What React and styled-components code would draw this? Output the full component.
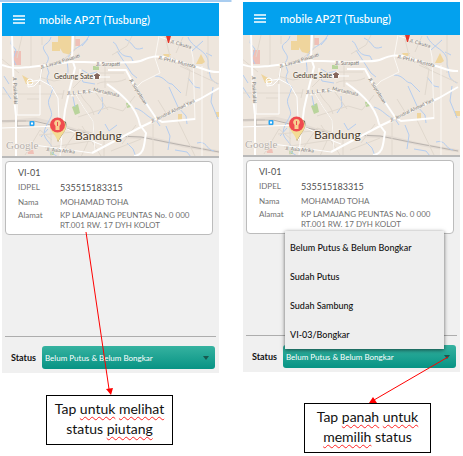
import React from "react";
import styled, { createGlobalStyle } from "styled-components";

const GlobalStyle = createGlobalStyle`
  * { box-sizing: border-box; }
  body {
    margin: 0;
    background: #fff;
    color: #111;
    font-family: Lato, "Open Sans", sans-serif;
  }
`;

const Page = styled.main`
  display: grid;
  grid-template-columns: 1fr 1fr;
  gap: 24px;
  padding: 0 3px 0 2px;
  background: linear-gradient(#a9cdf0, #a9cdf0) 0 0 / 50% 2px no-repeat;
`;

const Column = styled.section`
  position: relative;
  display: flex;
  flex-direction: column;
  padding-top: ${(p) => p.$top}px;
`;

const Phone = styled.div`
  display: flex;
  flex-direction: column;
  background: #f0f0f0;
`;

const AppBar = styled.header`
  display: flex;
  align-items: center;
  gap: 14px;
  height: 33px;
  padding: 0 11px;
  background: #03a1ee;
  color: #fff;
`;

const MenuButton = styled.button`
  display: flex;
  padding: 0;
  border: 0;
  background: none;
  color: inherit;
`;

const Title = styled.h1`
  margin: 0;
  font-size: 11px;
  line-height: 16px;
  font-weight: 500;
  white-space: nowrap;
`;

const MapFrame = styled.div`
  height: 122px;
  border-bottom: 2px solid #b9b9b9;
  background: #eee6dd;

  svg {
    display: block;
    width: 100%;
    height: 100%;
  }
`;

const Card = styled.article`
  margin: 3px 6px 0 3px;
  padding: 4px 12px;
  border: 1px solid #bcbcbc;
  border-radius: 4px;
  background: #fff;
  color: #707070;
`;

const CardTitle = styled.h2`
  margin: 0;
  font-size: 9px;
  line-height: 14px;
  font-weight: 400;
  color: #505050;
`;

const Details = styled.dl`
  display: grid;
  grid-template-columns: 42px 1fr;
  margin: 0;
  font-size: 8px;
  line-height: 10px;
`;

const Term = styled.dt`
  font-size: 8px;
  line-height: ${(p) => (p.$tall ? 15 : 10)}px;
`;

const Value = styled.dd`
  margin: 0;
  font-size: ${(p) => (p.$large ? 9 : 8)}px;
  line-height: ${(p) => (p.$tall ? 15 : 10)}px;
  color: ${(p) => (p.$large ? "#505050" : "#707070")};
  white-space: nowrap;
`;

const StatusBar = styled.form`
  display: flex;
  align-items: center;
  gap: 6px;
  margin: 101px 3px 0;
  padding: 9px 1px 4px 6px;
  border-top: 1px solid #adadad;
`;

const StatusLabel = styled.label`
  width: 25px;
  font-size: 9px;
  line-height: 12px;
  font-weight: 700;
`;

const SelectWrap = styled.div`
  position: relative;
  flex: 1;
  display: flex;
  align-items: center;
`;

const Select = styled.select`
  appearance: none;
  width: 100%;
  height: 23px;
  padding: 0 16px 0 3px;
  border: 0;
  border-radius: 3px;
  background: linear-gradient(#36b2a0, #079384);
  color: #fff;
  font-family: inherit;
  font-size: 8px;
`;

const Caret = styled.svg`
  position: absolute;
  right: 6px;
  pointer-events: none;
`;

const Menu = styled.ul`
  position: absolute;
  z-index: 1;
  left: 2px;
  right: 12px;
  bottom: 19px;
  margin: 0;
  padding: 2px 0 0;
  list-style: none;
  background: #eee;
  box-shadow: 0 1px 4px #0009;
`;

const MenuItem = styled.button`
  display: block;
  width: 100%;
  padding: 0 5px;
  border: 0;
  background: none;
  color: #111;
  font-family: inherit;
  font-size: 9px;
  font-weight: 500;
  line-height: 29px;
  text-align: left;
`;

const Note = styled.p`
  align-self: flex-start;
  width: 127px;
  margin: ${(p) => (p.$low ? "31px 0 0 61px" : "22px 0 0 44px")};
  padding: 3px 0 5px;
  border: 1px solid #000;
  background: #fff;
  color: #111;
  font-size: 14px;
  line-height: 20px;
  text-align: center;
`;

const Misspelt = styled.span`
  text-decoration: underline wavy #f22 1px;
  text-underline-offset: 2px;
  text-decoration-skip-ink: none;
`;

const Pointer = styled.svg`
  position: absolute;
  z-index: 2;
  left: 0;
  top: 0;
  overflow: visible;
  pointer-events: none;
`;

const STATUSES = ["Belum Putus & Belum Bongkar", "Sudah Putus", "Sudah Sambung", "VI-03/Bongkar"];

function CityMap({ shift }) {
  return (
    <MapFrame>
      <svg viewBox={`${2 + shift} 36 217 120`} preserveAspectRatio="xMidYMid slice" role="img" aria-label="Bandung">
        <g fill="#efd59d">
          <path d="M58 36h13v19l-8-2-5-8zM52 42h8v9h-8z" />
          <path d="M196 64l5-10 4 8-3 2zM163 54h8l-4 6zM178 114h4v6h-4zM216 112h6v5h-6zM22 75l7 4 5 4-8 1z" />
        </g>
        <path fill="#efc0b7" d="M14 51h7v14h-7zM75 39h5v7h-5zM27 150l6-1 1 5h-6z" />
        <path fill="#b9d49c" d="M72 107l6-3 2 9-5 2zM93 66h6v4h-6zM126 103l4-1 1 5-4 1zM50 151h4v4h-4z" />
        <path fill="none" stroke="#e4dcd4" strokeWidth="3" d="M2 122l34-3 24 6 30 10 60 3 34 8 36 6" />
        <path fill="none" stroke="#b9b3ae" strokeWidth="1" d="M2 121h32l30 7 31 7 46 2 35 7 43 8M17 121v5h17" />
        <g fill="none" stroke="#b4cdf0" strokeWidth="1">
          <path d="M12 36l-1 8 5 6-3 9 3 6" />
          <path d="M51 37c-2 8-10 7-7 13s7 7 2 14l3 9c-4 6-1 12 4 15l-3 9c-5 8 4 14 1 20s-9 14-6 20 9 8 7 16l6 4" />
          <path d="M89 36c-7 13-17 11-20 20-4 8 1 12-2 20M88 39l-6 7" />
          <path d="M113 42c5 2 4 11 12 14l6 1 3 6M117 51l15 23 5 4M125 39c11 5 7 13 18 9" />
          <path d="M135 108c10 3 12 10 21 12l4 6M146 104l12 17M155 76c10 0 11 8 17 8l9 9M169 87l9 20 8 9 1 8" />
          <path d="M188 78l7 9 5 1M188 37c5 13 22 13 20 28 3 11 0 14 10 19M203 41l-11 10M213 87l-2 15 7 17M206 53l6 3" />
          <path d="M102 97l1 10-5 7M73 97l2 10M127 143l6 6 3 8M166 126l4 10-2 14M197 143c10-3 9 7 17 8M175 150l12 2 4 5M41 137l7-8M105 124l4 7 8-6" />
          <path d="M80 74l3 8 12 2M82 70l7 4 8-2M4 76l5 8M3 87l8 12" />
        </g>
        <g fill="none" stroke="#e0d8ce" strokeWidth="1">
          <path d="M2 94h62M26 121h9M64 90l-2 9M42 37v8M27 99h12M39 77l15 4 15-3M105 66v22M99 73h25M97 84c9-5 16 1 29-5" />
          <path d="M75 93l9 15 9 13 2 31M80 93c6 12 11 11 14 22M93 89l15 21M78 117l31-10 14 4 12-15M25 155l15-25 12 10M51 129v27M39 135l47-4M45 148l60-9M82 126l19 30M65 148l13-19 14 4-11 24M104 137v19" />
          <path d="M112 55l15-9 5-10M165 36l6 25M183 37l-7 16M173 58l17 12-4 26M208 36v38M180 66l39 18M153 124v32M178 121l17 35M122 144l14-19M111 151l30-12M166 113l-8-13" />
          <path d="M2 59l17 14M22 36l-5 22M31 36v32M44 63l-5 22M75 36v14l-16 13M81 80l-8 8" />
        </g>
        <g fill="none" stroke="#fbf8f4" strokeWidth="1">
          <path d="M159 36l-4 22 5 15-18 9-8 8M160 37l21 7 10 4 2 10 2 62M202 66v91M75 93l9 15 9 13 2 31" />
        </g>
        <g fill="none" stroke="#fff" strokeWidth="2" strokeLinejoin="round">
          <path d="M2 65c10 4 15 3 28 2l25-3 15-2h14l26 1c18-2 25 1 33-3 10-4 12-4 21-3l29 9c11 2 16 7 26 6" />
          <path d="M73 36l-1 23 3 9-6 24-4 18-2 17-4 14M12 36l2 62 2 18v40" />
          <path d="M108 70h18l9 17 21 31 6 4 33-3" />
          <path d="M92 153l49-26 42-20 17-8 19-11" />
          <path d="M107 84c10 7 29 20 33 41l6 8c-2 11-1 22-12 23" />
        </g>
        <g fill="none" stroke="#fff" strokeWidth="1">
          <path d="M42 67l-2 13-12 2v5l6-1 6-6 11 6 7 12 1 22M17 93v22h23V85M2 128l57-2M59 126c18 6 26 13 43 19M34 145l58 8M62 134l-2 22M71 96c17-9 31-2 39-1M80 69v8h30" />
        </g>
        <circle cx="30" cy="82" r="3" fill="none" stroke="#fff" strokeWidth="1" />
        <g fill="#777" fontSize="5" fontFamily="Lato, sans-serif" stroke="#f4eee6" strokeWidth="1" paintOrder="stroke" strokeLinejoin="round">
          <text x="41" y="69" transform="rotate(-17 41 69)">Jl. Layang Pasupati</text>
          <text x="96" y="66">Jl. Surapati</text>
          <text x="158" y="59" transform="rotate(14 158 59)">Jl. PH.H. Mustofa</text>
          <text x="170" y="43" transform="rotate(16 170 43)">Jl. Cikutra</text>
          <text x="67" y="95" transform="rotate(-5 67 95)">Jl. L. L. R. E.</text>
          <text x="93" y="91" transform="rotate(13 93 91)">Martadinata</text>
          <text x="129" y="80" transform="rotate(58 129 80)">Jl. Supratman</text>
          <text x="152" y="123" transform="rotate(-26 152 123)">Jl. Jendral Ahmad Yani</text>
          <text x="13" y="77" transform="rotate(88 13 77)">Jl. Pasirkaliki</text>
          <text x="46" y="151" transform="rotate(5 46 151)">Jl. Asia Afrika</text>
        </g>
        <g fill="#4a3c2e" stroke="#f4eee6" strokeWidth="2" paintOrder="stroke" strokeLinejoin="round" fontFamily="Lato, sans-serif">
          <text x="54" y="79" fontSize="7">Gedung Sate</text>
          <text x="75" y="140" fontSize="12">Bandung</text>
        </g>
        <circle cx="97" cy="76" r="3.5" fill="#fff" />
        <path d="M94 75l3-2 3 2v1h-6zM95 76h4v3h-4z" fill="#85665d" />
        <rect x="29.5" y="121" width="5" height="5" rx="1" fill="#27a4f2" />
        <path d="M31 122.5h2v2h-2z" fill="#fff" />
        <text x="6" y="149" fontSize="11" fontFamily="Liberation Serif, serif" fill="#b5aea8" stroke="#f8f5f1" strokeWidth="1" paintOrder="stroke">
          Google
        </text>
        <path d="M166 36h5l-2 7h-1z" fill="#e4382b" />
        <path d="M66 122c2 7-4 12-8 20l-1-3 7-18z" fill="#776c60" />
        <path d="M50 127c0-5 3-9 8-9s8 4 8 9c0 4-5 8-8 15-2-7-8-11-8-15z" fill="#f3dc94" />
        <circle cx="57.5" cy="125" r="7.5" fill="#ef4b50" />
        <path d="M57.5 120a3.3 3.3 0 0 1 2 6v4h-4v-4a3.3 3.3 0 0 1 2-6z" fill="#f8cf91" />
        <path d="M57.5 122v4" stroke="#ef4b50" strokeWidth="1" />
      </svg>
    </MapFrame>
  );
}

function PhoneScreen({ id, open, mapShift }) {
  return (
    <Phone>
      <AppBar>
        <MenuButton type="button" aria-label="Menu">
          <svg width="12" height="9" viewBox="0 0 12 9">
            <path d="M0 1h12M0 4.500h12M0 8h12" stroke="currentColor" strokeWidth="1.400" />
          </svg>
        </MenuButton>
        <Title>mobile AP2T (Tusbung)</Title>
      </AppBar>
      <CityMap shift={mapShift} />
      <Card>
        <CardTitle>VI-01</CardTitle>
        <Details>
          <Term $tall>IDPEL</Term>
          <Value $large $tall>535515183315</Value>
          <Term $tall>Nama</Term>
          <Value $tall>MOHAMAD TOHA</Value>
          <Term>Alamat</Term>
          <Value>
            KP LAMAJANG PEUNTAS No. 0 000
            <br />
            RT.001 RW. 17 DYH KOLOT
          </Value>
        </Details>
      </Card>
      <StatusBar>
        <StatusLabel htmlFor={id}>Status</StatusLabel>
        <SelectWrap>
          <Select id={id} defaultValue={STATUSES[0]}>
            {STATUSES.map((s) => (
              <option key={s}>{s}</option>
            ))}
          </Select>
          <Caret width="6" height="4" viewBox="0 0 6 4">
            <path d="M0 0h6L3 4z" fill="#17594f" />
          </Caret>
          {open && (
            <Menu>
              {STATUSES.map((s) => (
                <li key={s}>
                  <MenuItem type="button">{s}</MenuItem>
                </li>
              ))}
            </Menu>
          )}
        </SelectWrap>
      </StatusBar>
    </Phone>
  );
}

export default function App() {
  return (
    <>
      <GlobalStyle />
      <Page>
        <Column $top={3}>
          <PhoneScreen id="status-left" mapShift={0} />
          <Note>
            Tap <Misspelt>untuk</Misspelt> <Misspelt>melihat</Misspelt>
            <br />
            status <Misspelt>piutang</Misspelt>
          </Note>
          <Pointer width="217" height="395" aria-hidden="true">
            <path d="M84 232L107 389" stroke="#f00" fill="none" />
            <path d="M104 389l7-1-2 7z" fill="#f00" />
          </Pointer>
        </Column>
        <Column $top={2}>
          <PhoneScreen id="status-right" open mapShift={2} />
          <Note $low>
            Tap <Misspelt>panah</Misspelt> <Misspelt>untuk</Misspelt>
            <br />
            <Misspelt>memilih</Misspelt> status
          </Note>
          <Pointer width="217" height="403" aria-hidden="true">
            <path d="M205 357L131 400" stroke="#f00" fill="none" />
            <path d="M126 403l4-6 4 6z" fill="#f00" />
          </Pointer>
        </Column>
      </Page>
    </>
  );
}
